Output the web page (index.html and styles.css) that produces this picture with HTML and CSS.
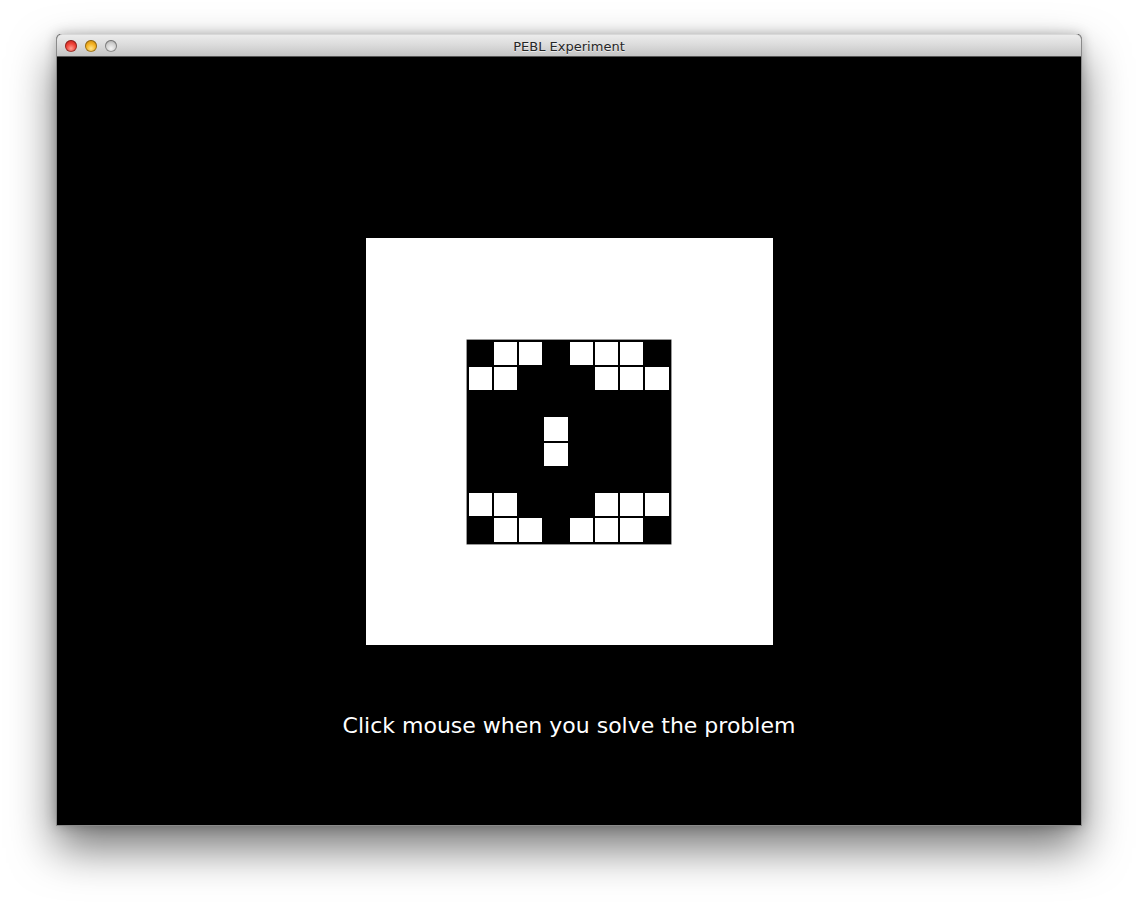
FILE: index.html
```html
<!DOCTYPE html>
<html>
<head>
<meta charset="utf-8">
<title>PEBL Experiment</title>
<link rel="stylesheet" href="styles.css">
</head>
<body>
<div class="window">
  <div class="titlebar">
    <div class="lights">
      <span class="light red"></span>
      <span class="light yellow"></span>
      <span class="light grey"></span>
    </div>
    <div class="title">PEBL Experiment</div>
  </div>
  <div class="screen">
    <div class="card">
      <div class="grid">
        <i></i><b></b><b></b><i></i><b></b><b></b><b></b><i></i>
        <b></b><b></b><i></i><i></i><i></i><b></b><b></b><b></b>
        <i></i><i></i><i></i><i></i><i></i><i></i><i></i><i></i>
        <i></i><i></i><i></i><b></b><i></i><i></i><i></i><i></i>
        <i></i><i></i><i></i><b></b><i></i><i></i><i></i><i></i>
        <i></i><i></i><i></i><i></i><i></i><i></i><i></i><i></i>
        <b></b><b></b><i></i><i></i><i></i><b></b><b></b><b></b>
        <i></i><b></b><b></b><i></i><b></b><b></b><b></b><i></i>
      </div>
    </div>
    <p class="prompt">Click mouse when you solve the problem</p>
  </div>
</div>
</body>
</html>
```
FILE: styles.css
```css
html, body {
  margin: 0;
  padding: 0;
  background: #ffffff;
  height: 100%;
  overflow: hidden;
}

.window {
  margin: 34px 0 0 56px;
  width: 1024px;
  border: 1px solid #8a8a8a;
  border-top: none;
  border-radius: 5px 5px 0 0;
  box-shadow: 0 22px 45px rgba(0, 0, 0, 0.55), 0 0 12px rgba(0, 0, 0, 0.25);
  background: #000;
}

.titlebar {
  position: relative;
  height: 21px;
  border-top: 1px solid #d8d8d8;
  border-bottom: 1px solid #555;
  border-radius: 5px 5px 0 0;
  background: linear-gradient(to bottom, #ececec 0%, #dcdcdc 45%, #c4c4c4 100%);
  display: flex;
  align-items: center;
  justify-content: center;
}

.lights {
  position: absolute;
  left: 8px;
  top: 5px;
  display: flex;
  gap: 8px;
}

.light {
  width: 12px;
  height: 12px;
  border-radius: 50%;
  box-shadow: inset 0 0 0 1px rgba(0, 0, 0, 0.35);
}

.red {
  background: radial-gradient(circle at 50% 70%, #ff9c8f 0%, #f0443a 45%, #b3120c 100%);
}

.yellow {
  background: radial-gradient(circle at 50% 70%, #ffe48a 0%, #f5b324 45%, #b87a06 100%);
}

.grey {
  background: radial-gradient(circle at 50% 70%, #f4f4f4 0%, #cfcfcf 50%, #8e8e8e 100%);
}

.title {
  font-family: "DejaVu Sans", "Liberation Sans", sans-serif;
  font-size: 13px;
  color: #262626;
  text-shadow: 0 1px 0 rgba(255, 255, 255, 0.6);
  padding-top: 2px;
}

.screen {
  height: 768px;
  display: flex;
  flex-direction: column;
  align-items: center;
  padding-top: 181px;
  box-sizing: border-box;
}

.card {
  width: 407px;
  height: 407px;
  margin-left: 1px;
  background: #fff;
  display: flex;
  align-items: center;
  justify-content: center;
}

.grid {
  width: 204px;
  height: 204px;
  margin-right: 2px;
  box-sizing: border-box;
  padding: 2px;
  background: #000;
  box-shadow: 0 0 0 0.5px #333;
  display: grid;
  grid-template-columns: repeat(8, 1fr);
  grid-template-rows: repeat(8, 1fr);
  gap: 2px;
}

.grid i {
  background: #000;
}

.grid b {
  background: #fff;
}

.prompt {
  margin: 68px 0 0 0;
  font-family: "DejaVu Sans", "Liberation Sans", sans-serif;
  font-size: 22px;
  line-height: 26px;
  color: #fff;
}
```
